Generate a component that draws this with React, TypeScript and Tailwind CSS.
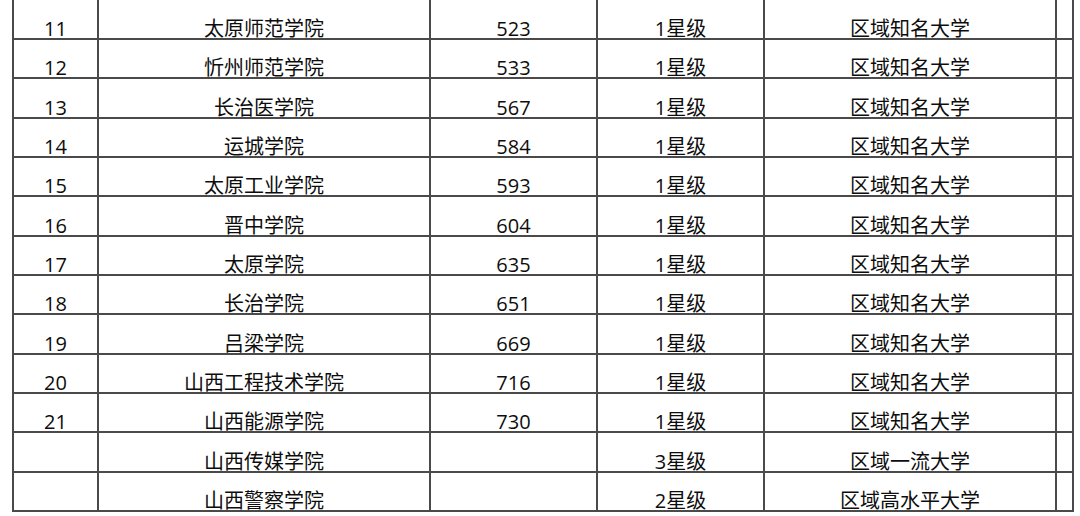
import React from "react";

type Row = [string, string, string, string, string];

const rows: Row[] = [
  ["11", "太原师范学院", "523", "1星级", "区域知名大学"],
  ["12", "忻州师范学院", "533", "1星级", "区域知名大学"],
  ["13", "长治医学院", "567", "1星级", "区域知名大学"],
  ["14", "运城学院", "584", "1星级", "区域知名大学"],
  ["15", "太原工业学院", "593", "1星级", "区域知名大学"],
  ["16", "晋中学院", "604", "1星级", "区域知名大学"],
  ["17", "太原学院", "635", "1星级", "区域知名大学"],
  ["18", "长治学院", "651", "1星级", "区域知名大学"],
  ["19", "吕梁学院", "669", "1星级", "区域知名大学"],
  ["20", "山西工程技术学院", "716", "1星级", "区域知名大学"],
  ["21", "山西能源学院", "730", "1星级", "区域知名大学"],
  ["", "山西传媒学院", "", "3星级", "区域一流大学"],
  ["", "山西警察学院", "", "2星级", "区域高水平大学"],
];

const heights = [
  "h-[40px]",
  "h-[39px]",
  "h-[40px]",
  "h-[39px]",
  "h-[39px]",
  "h-[40px]",
  "h-[39px]",
  "h-[39px]",
  "h-[40px]",
  "h-[39px]",
  "h-[39px]",
  "h-[40px]",
  "h-[39px]",
];

const cellBase =
  "flex items-end justify-center border-r-2 border-[#4a4a4a] leading-[18px] whitespace-nowrap";

export default function App() {
  return (
    <div
      className="w-[1080px] h-[516px] bg-white overflow-hidden text-[#0d0d0d] text-[20px]"
      style={{ fontFamily: '"Open Sans", "Noto Sans CJK SC", sans-serif' }}
    >
      <div className="ml-[12px] w-[1062px] border-l-2 border-[#4a4a4a]">
        {rows.map((r, i) => (
          <div
            key={i}
            className={`flex border-b-2 border-[#4a4a4a] ${heights[i]}`}
          >
            <div className={`${cellBase} w-[85px]`}>{r[0]}</div>
            <div className={`${cellBase} w-[332px]`}>{r[1]}</div>
            <div className={`${cellBase} w-[167px]`}>{r[2]}</div>
            <div className={`${cellBase} w-[167px]`}>{r[3]}</div>
            <div className={`${cellBase} w-[292px]`}>{r[4]}</div>
            <div className={`${cellBase} w-[17px]`}></div>
          </div>
        ))}
      </div>
    </div>
  );
}
